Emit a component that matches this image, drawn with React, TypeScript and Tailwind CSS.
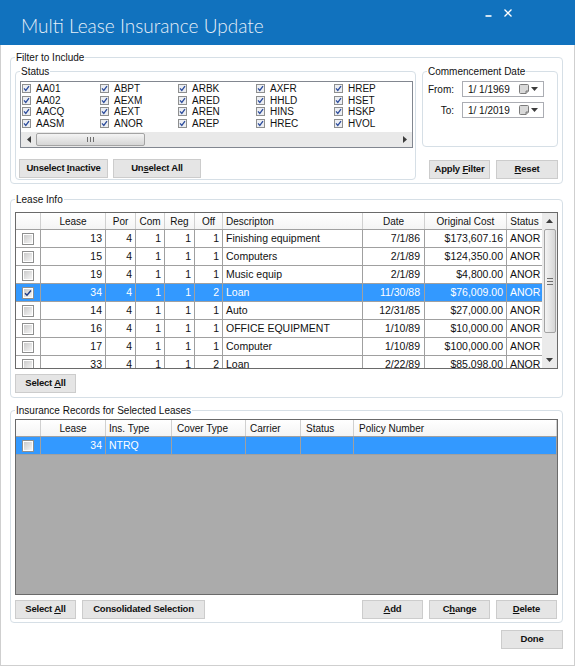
import React from 'react';

type Col = { w: string; label: string; head: string; body: string };

const leaseCols: Col[] = [
  { w: 'w-[25px]', label: '', head: 'justify-center', body: 'justify-start pl-[6px]' },
  { w: 'w-[65px]', label: 'Lease', head: 'justify-center', body: 'justify-end pr-[3px]' },
  { w: 'w-[30px]', label: 'Por', head: 'justify-center', body: 'justify-end pr-[3px]' },
  { w: 'w-[29px]', label: 'Com', head: 'justify-center', body: 'justify-end pr-[3px]' },
  { w: 'w-[30px]', label: 'Reg', head: 'justify-center', body: 'justify-end pr-[3px]' },
  { w: 'w-[28px]', label: 'Off', head: 'justify-center', body: 'justify-end pr-[3px]' },
  { w: 'w-[140px]', label: 'Descripton', head: 'justify-start pl-[3px]', body: 'justify-start pl-[3px]' },
  { w: 'w-[62px]', label: 'Date', head: 'justify-center', body: 'justify-end pr-[4px]' },
  { w: 'w-[82px]', label: 'Original Cost', head: 'justify-center', body: 'justify-end pr-[3px]' },
  { w: 'w-[36px]', label: 'Status', head: 'justify-center', body: 'justify-start pl-[3px]' },
];

const leaseRows = [
  ['13', '4', '1', '1', '1', 'Finishing equipment', '7/1/86', '$173,607.16', 'ANOR'],
  ['15', '4', '1', '1', '1', 'Computers', '2/1/89', '$124,350.00', 'ANOR'],
  ['19', '4', '1', '1', '1', 'Music equip', '2/1/89', '$4,800.00', 'ANOR'],
  ['34', '4', '1', '1', '2', 'Loan', '11/30/88', '$76,009.00', 'ANOR'],
  ['14', '4', '1', '1', '1', 'Auto', '12/31/85', '$27,000.00', 'ANOR'],
  ['16', '4', '1', '1', '1', 'OFFICE EQUIPMENT', '1/10/89', '$10,000.00', 'ANOR'],
  ['17', '4', '1', '1', '1', 'Computer', '1/10/89', '$100,000.00', 'ANOR'],
  ['33', '4', '1', '1', '2', 'Loan', '2/22/89', '$85,098.00', 'ANOR'],
];

const insCols: Col[] = [
  { w: 'w-[25px]', label: '', head: 'justify-center', body: 'justify-start pl-[6px]' },
  { w: 'w-[65px]', label: 'Lease', head: 'justify-center', body: 'justify-end pr-[3px]' },
  { w: 'w-[66px]', label: 'Ins. Type', head: 'justify-start pl-[3px]', body: 'justify-start pl-[3px]' },
  { w: 'w-[74px]', label: 'Cover Type', head: 'justify-start pl-[5px]', body: 'justify-start pl-[3px]' },
  { w: 'w-[55px]', label: 'Carrier', head: 'justify-start pl-[4px]', body: 'justify-start pl-[3px]' },
  { w: 'w-[53px]', label: 'Status', head: 'justify-start pl-[5px]', body: 'justify-start pl-[3px]' },
  { w: 'w-[203px]', label: 'Policy Number', head: 'justify-start pl-[5px]', body: 'justify-start pl-[3px]' },
];

const statusCodes = [
  ['AA01', 'AA02', 'AACQ', 'AASM'],
  ['ABPT', 'AEXM', 'AEXT', 'ANOR'],
  ['ARBK', 'ARED', 'AREN', 'AREP'],
  ['AXFR', 'HHLD', 'HINS', 'HREC'],
  ['HREP', 'HSET', 'HSKP', 'HVOL'],
];

function U({ children }: { children: React.ReactNode }) {
  return <span className="underline underline-offset-[1px]">{children}</span>;
}

function Btn({ w, children }: { w: string; children: React.ReactNode }) {
  return (
    <button
      className={`${w} h-[19px] shrink-0 bg-[#e5e5e5] border border-[#cccccc] font-bold text-[9.5px] tracking-[-0.2px] text-[#111] flex items-center justify-center`}
    >
      <span className="whitespace-pre">{children}</span>
    </button>
  );
}

function Group({ label, className = '', children }: { label: string; className?: string; children: React.ReactNode }) {
  return (
    <fieldset className={`border border-[#d6dfe6] rounded-[4px] shrink-0 ${className}`}>
      <legend className="ml-[4px] px-[1px] text-[10px] leading-[11px] text-[#111]">{label}</legend>
      {children}
    </fieldset>
  );
}

function GridCheck({ checked = false }: { checked?: boolean }) {
  return (
    <div className="w-[12px] h-[12px] border border-[#8e8f8f] bg-white p-[1px]">
      <div className="w-full h-full bg-gradient-to-br from-[#cbcbcb] to-[#f5f5f5] flex items-center justify-center">
        {checked && (
          <svg width="8" height="8" viewBox="0 0 8 8">
            <path d="M1 4.2 L3 6.3 L7 1.5" fill="none" stroke="#1e3a86" strokeWidth="1.4" />
          </svg>
        )}
      </div>
    </div>
  );
}

function ListCheck() {
  return (
    <svg width="9" height="9" viewBox="0 0 9 9" className="shrink-0">
      <rect x="0.5" y="0.5" width="8" height="8" fill="#eceef2" stroke="#8e8f8f" />
      <path d="M2 4.4 L3.8 6.4 L7 2.2" fill="none" stroke="#2b4b9b" strokeWidth="1.3" />
    </svg>
  );
}

function Tri({ dir }: { dir: 'up' | 'down' | 'left' | 'right' }) {
  const d =
    dir === 'up' ? 'M0 4 L3.5 0 L7 4 Z' : dir === 'down' ? 'M0 0 L7 0 L3.5 4 Z' : dir === 'left' ? 'M4 0 L4 7 L0 3.5 Z' : 'M0 0 L0 7 L4 3.5 Z';
  const w = dir === 'up' || dir === 'down' ? 7 : 4;
  const h = dir === 'up' || dir === 'down' ? 4 : 7;
  return (
    <svg width={w} height={h} viewBox={`0 0 ${w} ${h}`}>
      <path d={d} fill="#3c3c3c" />
    </svg>
  );
}

function HScroll() {
  return (
    <div className="h-[15px] bg-[#e9e9e9] flex items-center">
      <div className="w-[15px] h-full flex items-center justify-center">
        <Tri dir="left" />
      </div>
      <div className="w-[109px] h-[13px] rounded-[2px] border border-[#a3a3a3] bg-gradient-to-b from-[#f4f4f4] to-[#d6d6d6] flex items-center justify-center gap-[2px]">
        <div className="w-[1px] h-[5px] bg-[#6f6f6f]" />
        <div className="w-[1px] h-[5px] bg-[#6f6f6f]" />
        <div className="w-[1px] h-[5px] bg-[#6f6f6f]" />
      </div>
      <div className="flex-1" />
      <div className="w-[15px] h-full flex items-center justify-center">
        <Tri dir="right" />
      </div>
    </div>
  );
}

function VScroll() {
  return (
    <div className="w-[15px] h-full bg-[#ebebeb] flex flex-col items-center">
      <div className="h-[16px] w-full flex items-center justify-center">
        <Tri dir="up" />
      </div>
      <div className="w-[12px] h-[104px] rounded-[2px] border border-[#a3a3a3] bg-gradient-to-r from-[#f4f4f4] to-[#d6d6d6] flex flex-col items-center justify-center gap-[2px]">
        <div className="w-[6px] h-[1px] bg-[#6f6f6f]" />
        <div className="w-[6px] h-[1px] bg-[#6f6f6f]" />
        <div className="w-[6px] h-[1px] bg-[#6f6f6f]" />
      </div>
      <div className="flex-1" />
      <div className="h-[16px] w-full flex items-center justify-center">
        <Tri dir="down" />
      </div>
    </div>
  );
}

function HeaderRow({ cols }: { cols: Col[] }) {
  return (
    <div className="flex h-[17px] shrink-0 border-b border-[#a0a0a0] bg-gradient-to-b from-white to-[#f4f4f4]">
      {cols.map((c, i) => (
        <div key={i} className={`${c.w} ${c.head} shrink-0 h-full flex items-center border-r border-[#d0d0d0] whitespace-nowrap overflow-hidden`}>
          {c.label}
        </div>
      ))}
    </div>
  );
}

function BodyRow({ cols, cells, selected, checked }: { cols: Col[]; cells: string[]; selected: boolean; checked: boolean }) {
  return (
    <div className={`flex h-[18px] shrink-0 border-b border-[#a0a0a0] ${selected ? 'bg-[#3399ff] text-white' : 'bg-white'}`}>
      {cols.map((c, i) => (
        <div key={i} className={`${c.w} ${c.body} shrink-0 h-full flex items-center border-r border-[#a0a0a0] whitespace-nowrap overflow-hidden`}>
          {i === 0 ? <GridCheck checked={checked} /> : cells[i - 1]}
        </div>
      ))}
    </div>
  );
}

function DateBox({ value }: { value: string }) {
  return (
    <div className="w-[82px] h-[16px] border border-[#abadb3] bg-white flex items-center pl-[5px] pr-[5px]">
      <span className="flex-1 whitespace-pre">{value}</span>
      <svg width="10" height="10" viewBox="0 0 10 10" className="mr-[2px]">
        <path d="M0.5 1.5 Q0.5 0.5 1.5 0.5 H8.5 Q9.5 0.5 9.5 1.5 V7 L7 9.5 H1.5 Q0.5 9.5 0.5 8.5 Z" fill="#d9d9d9" stroke="#7b7b7b" />
        <path d="M7 9.5 V7 H9.5" fill="#bdbdbd" stroke="#7b7b7b" />
      </svg>
      <Tri dir="down" />
    </div>
  );
}

function TitleBar() {
  return (
    <div className="h-[45px] shrink-0 bg-[#1172be] flex items-start justify-between">
      <div className="pl-[21px] pt-[15px] font-['Lato','Open_Sans',sans-serif] font-light text-[19px] leading-[22px] text-[#e6eff8]">
        Multi Lease Insurance Update
      </div>
      <div className="flex items-start gap-[12px] pt-[9px] pr-[63px]">
        <svg width="7" height="8" viewBox="0 0 7 8">
          <path d="M0.5 7 H6.5" stroke="#ffffff" strokeWidth="1.6" />
        </svg>
        <svg width="8" height="8" viewBox="0 0 8 8">
          <path d="M0.5 0.5 L7.5 7.5 M7.5 0.5 L0.5 7.5" stroke="#ffffff" strokeWidth="1.3" />
        </svg>
      </div>
    </div>
  );
}

export default function App() {
  return (
    <div className="w-[575px] h-[666px] bg-white overflow-hidden font-['Liberation_Sans',Arial,sans-serif] text-[10px] text-[#111] flex flex-col">
      <TitleBar />
      <div className="flex-1 border-x border-b border-[#cfcfcf] flex flex-col pl-[9px]">
        {/* Filter to Include */}
        <Group label="Filter to Include" className="mt-[7px] w-[553px] h-[132px]">
          <div className="flex items-start gap-[6px] pl-[4px] pt-[3px]">
            <Group label="Status" className="w-[401px] h-[114px]">
              <div className="pl-[4px] pt-[4px]">
                <div className="w-[393px] h-[67px] border border-[#828790] bg-white flex flex-col justify-between">
                  <div className="flex pl-[1px] pt-[1px]">
                    {statusCodes.map((col, ci) => (
                      <div key={ci} className="w-[79px] flex flex-col">
                        {col.map((code) => (
                          <div key={code} className="h-[11.5px] flex items-center gap-[5px] leading-[11px]">
                            <ListCheck />
                            <span>{code}</span>
                          </div>
                        ))}
                      </div>
                    ))}
                  </div>
                  <HScroll />
                </div>
                <div className="flex gap-[5px] mt-[11px] ml-[-1px]">
                  <Btn w="w-[89px]">
                    Unselect <U>I</U>nactive
                  </Btn>
                  <Btn w="w-[88px]">
                    Un<U>s</U>elect All
                  </Btn>
                </div>
              </div>
            </Group>
            <div className="flex flex-col">
              <Group label="Commencement Date" className="w-[136px] h-[81px]">
                <div className="flex flex-col pt-[4px]">
                  <div className="flex items-center">
                    <span className="w-[31px] text-right">From:</span>
                    <div className="ml-[8px]">
                      <DateBox value="1/ 1/1969" />
                    </div>
                  </div>
                  <div className="flex items-center mt-[5px]">
                    <span className="w-[31px] text-right">To:</span>
                    <div className="ml-[8px]">
                      <DateBox value="1/ 1/2019" />
                    </div>
                  </div>
                </div>
              </Group>
              <div className="flex gap-[6px] pl-[7px] mt-[13px]">
                <Btn w="w-[61px]">
                  Apply <U>F</U>ilter
                </Btn>
                <Btn w="w-[62px]">
                  <U>R</U>eset
                </Btn>
              </div>
            </div>
          </div>
        </Group>

        {/* Lease Info */}
        <Group label="Lease Info" className="mt-[10px] w-[553px] h-[204px]">
          <div className="pl-[4px] pt-[7px]">
            <div className="w-[543px] h-[157px] border border-[#6a6a6a] flex overflow-hidden text-[10.5px]">
              <div className="w-[527px] flex flex-col overflow-hidden">
                <div className="text-[10px]">
                  <HeaderRow cols={leaseCols} />
                </div>
                {leaseRows.map((r, i) => (
                  <BodyRow key={i} cols={leaseCols} cells={r} selected={i === 3} checked={i === 3} />
                ))}
              </div>
              <VScroll />
            </div>
            <div className="mt-[5px]">
              <Btn w="w-[61px]">
                Select <U>A</U>ll
              </Btn>
            </div>
          </div>
        </Group>

        {/* Insurance Records */}
        <Group label="Insurance Records for Selected Leases" className="mt-[7px] w-[553px] h-[218px]">
          <div className="pl-[4px] pt-[3px]">
            <div className="w-[543px] h-[176px] border border-[#6a6a6a] bg-[#ababab] flex flex-col overflow-hidden text-[10.5px]">
              <div className="text-[10px]">
                <HeaderRow cols={insCols} />
              </div>
              <BodyRow cols={insCols} cells={['34', 'NTRQ', '', '', '', '']} selected checked={false} />
            </div>
            <div className="w-[543px] flex justify-between mt-[5px] pr-[1px]">
              <div className="flex gap-[6px]">
                <Btn w="w-[61px]">
                  Select <U>A</U>ll
                </Btn>
                <Btn w="w-[123px]">Consolidated Selection</Btn>
              </div>
              <div className="flex gap-[6px]">
                <Btn w="w-[61px]">
                  <U>A</U>dd
                </Btn>
                <Btn w="w-[61px]">
                  C<U>h</U>ange
                </Btn>
                <Btn w="w-[61px]">
                  <U>D</U>elete
                </Btn>
              </div>
            </div>
          </div>
        </Group>

        <div className="flex justify-end pr-[11px] mt-[7px]">
          <Btn w="w-[62px]">Done</Btn>
        </div>
      </div>
    </div>
  );
}
